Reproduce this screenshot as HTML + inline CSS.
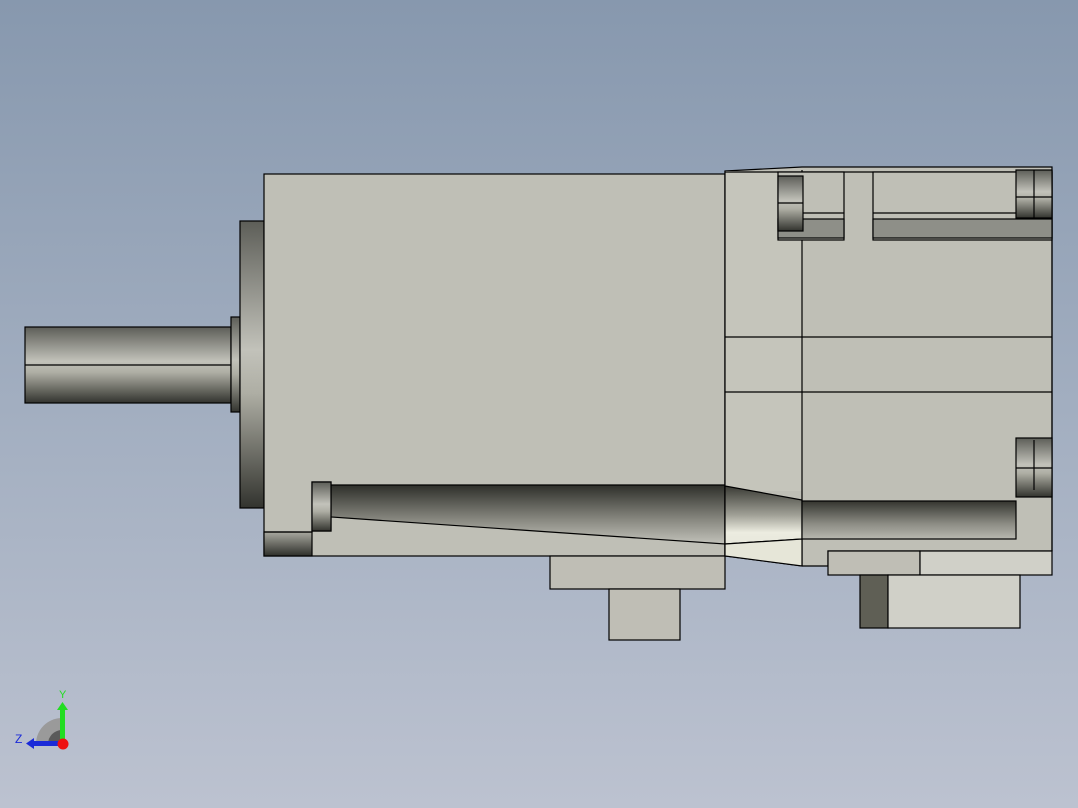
<!DOCTYPE html>
<html><head><meta charset="utf-8"><style>
html,body{margin:0;padding:0;width:1078px;height:808px;overflow:hidden}
svg{display:block}
</style></head><body>
<svg width="1078" height="808" viewBox="0 0 1078 808" xmlns="http://www.w3.org/2000/svg">
<defs>
<linearGradient id="bg" x1="0" y1="0" x2="0" y2="1">
<stop offset="0" stop-color="#8798ae"/><stop offset="0.5" stop-color="#a2aec0"/><stop offset="1" stop-color="#bcc2d0"/></linearGradient>
<linearGradient id="cylV" x1="0" y1="0" x2="0" y2="1">
<stop offset="0" stop-color="#5d5e58"/><stop offset="0.45" stop-color="#c2c2ba"/><stop offset="0.6" stop-color="#aeaea4"/><stop offset="1" stop-color="#32332e"/></linearGradient>
<linearGradient id="tube" x1="0" y1="0" x2="0" y2="1">
<stop offset="0" stop-color="#2e2f2a"/><stop offset="0.6" stop-color="#8a8a82"/><stop offset="1" stop-color="#c2c2ba"/></linearGradient>
<linearGradient id="tube2" x1="0" y1="0" x2="0" y2="1">
<stop offset="0" stop-color="#34352f"/><stop offset="0.6" stop-color="#8c8c84"/><stop offset="1" stop-color="#b8b8b0"/></linearGradient>
<linearGradient id="cone" x1="0" y1="0" x2="0" y2="1">
<stop offset="0" stop-color="#3a3b35"/><stop offset="0.5" stop-color="#a0a096"/><stop offset="0.8" stop-color="#ecece0"/><stop offset="1" stop-color="#e8e8dc"/></linearGradient>
<linearGradient id="blk" x1="0" y1="0" x2="0" y2="1">
<stop offset="0" stop-color="#a9a9a0"/><stop offset="1" stop-color="#2e2f2a"/></linearGradient>
</defs>
<rect width="1078" height="808" fill="url(#bg)"/>
<g stroke="#000" stroke-width="1.2">
<rect x="25" y="327" width="206" height="76" fill="url(#cylV)"/>
<line x1="25" y1="365" x2="264" y2="365"/>
<rect x="231" y="317" width="9" height="95" fill="url(#cylV)"/>
<rect x="240" y="221" width="24" height="287" fill="url(#cylV)"/>
<rect x="264" y="174" width="461" height="382" fill="#bfbfb6"/>
<rect x="264" y="532" width="48" height="24" fill="url(#blk)"/>
<path d="M264 532 H312 V482 H331 V531 H312" fill="#c0c0b7"/>
<path d="M331 485 H725 V544 L331 517 Z" fill="url(#tube)"/>
<rect x="312" y="482" width="19" height="49" fill="url(#cylV)" />
<rect x="550" y="556" width="175" height="33" fill="#bfbeb5"/>
<rect x="609" y="589" width="71" height="51" fill="#bfbeb5"/>
<path d="M725 171 L802 167 H1052 V551 H828 V566 H802 L725 556 Z" fill="#bfbfb6"/>
<rect x="725" y="171" width="77" height="320" fill="#c5c5bb" stroke="none"/>
<line x1="725" y1="171" x2="725" y2="556"/>
<line x1="802" y1="170" x2="802" y2="566"/>
<line x1="725" y1="337" x2="1052" y2="337"/>
<line x1="725" y1="392" x2="1052" y2="392"/>
<line x1="1052" y1="170" x2="1052" y2="551"/>
<line x1="725" y1="172" x2="1052" y2="172"/>
<path d="M725 486 L802 500 V539 L725 544 Z" fill="url(#cone)"/>
<path d="M725 544 L802 539 V566 L725 556 Z" fill="#e6e6d8"/>
<rect x="802" y="501" width="214" height="38" fill="url(#tube2)"/>
<rect x="778" y="172" width="66" height="68" fill="#bfbfb6"/>
<rect x="778" y="219" width="66" height="19" fill="#8e8f88"/>
<line x1="803" y1="213" x2="844" y2="213"/>
<rect x="873" y="172" width="179" height="68" fill="#bfbfb6"/>
<rect x="873" y="219" width="179" height="19" fill="#8e8f88"/>
<line x1="873" y1="213" x2="1016" y2="213"/>
<rect x="778" y="176" width="25" height="55" fill="url(#cylV)"/>
<line x1="778" y1="203" x2="803" y2="203"/>
<rect x="1016" y="170" width="36" height="48" fill="url(#cylV)"/>
<line x1="1034" y1="170" x2="1034" y2="218"/><line x1="1016" y1="197" x2="1052" y2="197"/>
<rect x="1016" y="438" width="36" height="59" fill="url(#cylV)"/>
<line x1="1034" y1="440" x2="1034" y2="490"/><line x1="1016" y1="468" x2="1052" y2="468"/>
<rect x="828" y="551" width="92" height="24" fill="#bfbeb5"/>
<rect x="920" y="551" width="132" height="24" fill="#d0d0c8"/>
<rect x="860" y="575" width="28" height="53" fill="#5f5f55"/>
<rect x="888" y="575" width="132" height="53" fill="#d0d0c8"/>
</g>
<path d="M36 744 A26 26 0 0 1 62 718 V744 Z" fill="#9a9a9a"/>
<path d="M48 744 A14 14 0 0 1 62 730 V744 Z" fill="#5a5a5a"/>
<rect x="60" y="708" width="5" height="36" fill="#22dd22"/>
<path d="M57 710 L62.5 702 L68 710 Z" fill="#22dd22"/>
<rect x="32" y="741" width="30" height="5" fill="#1a2ad8"/>
<path d="M34 738 L26 743.5 L34 749 Z" fill="#1a2ad8"/>
<circle cx="63" cy="744" r="5.5" fill="#ee1111"/>
<text x="59" y="698" font-family="Liberation Sans, sans-serif" font-size="11" fill="#22dd22">Y</text>
<text x="15" y="743" font-family="Liberation Sans, sans-serif" font-size="12" fill="#1a2ad8">Z</text>
</svg>
</body></html>
